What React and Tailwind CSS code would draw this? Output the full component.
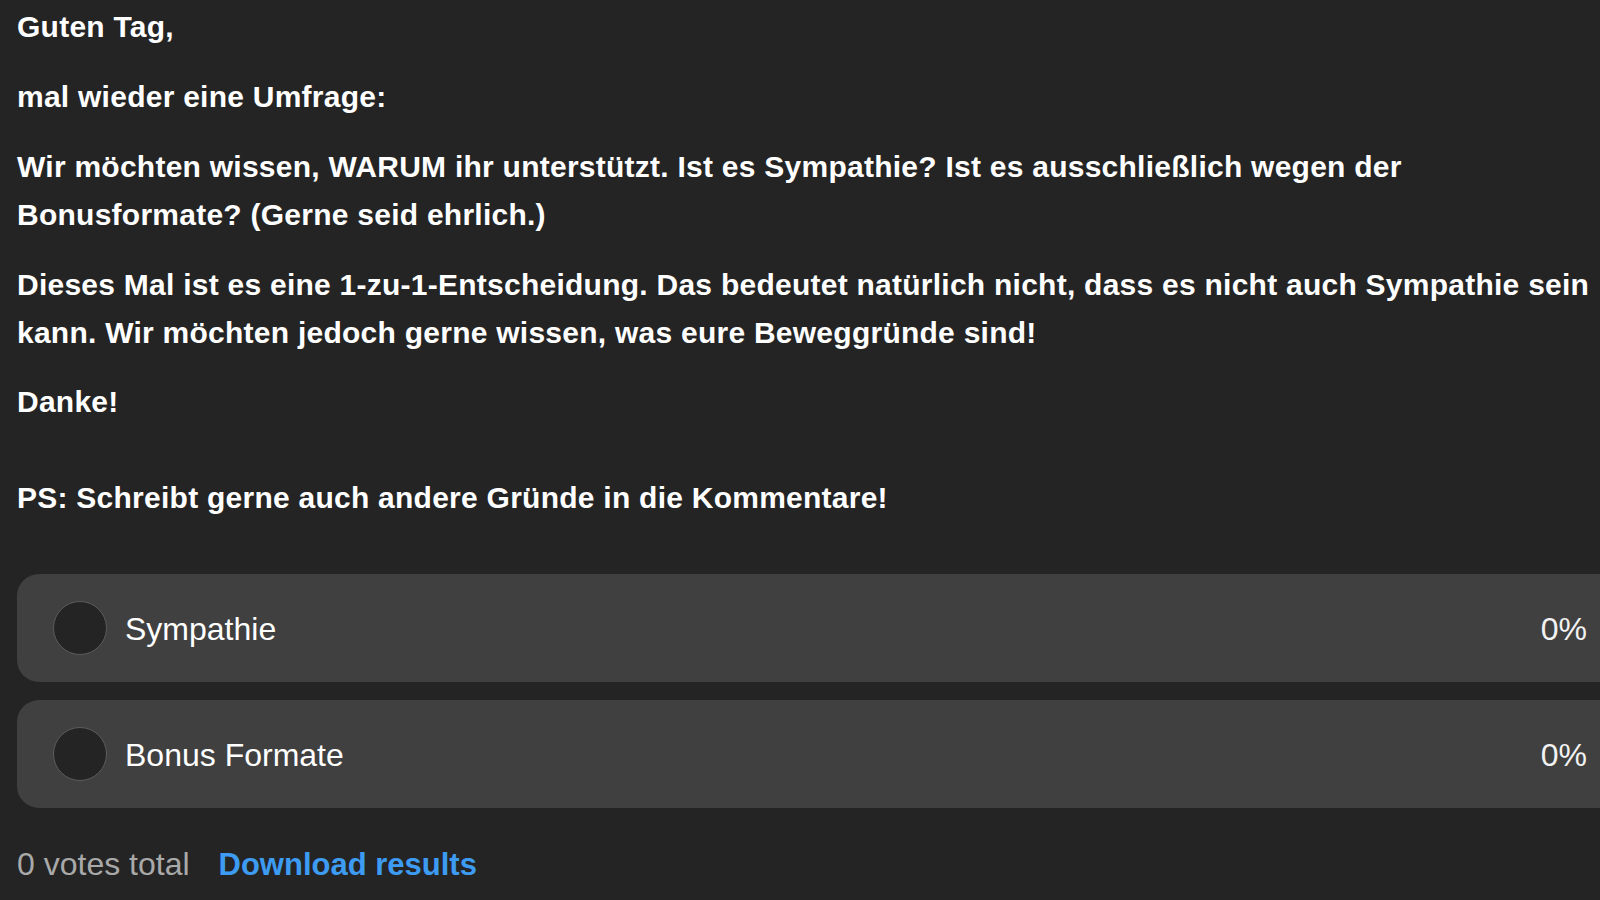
export default function App() {
  const options = [
    { id: 1, label: 'Sympathie', percent: '0%' },
    { id: 2, label: 'Bonus Formate', percent: '0%' },
  ]

  return (
    <div className="h-[900px] w-[1600px] overflow-hidden bg-[#242424] font-['Liberation_Sans',Arial,sans-serif] text-white">
      <div className="w-[1623px] pl-[17px] pt-[3px]">
        <div className="whitespace-nowrap text-[30px] font-bold leading-[48px] tracking-[0.25px] text-white">
          <p>Guten Tag,</p>
          <p className="mt-[22px]">mal wieder eine Umfrage:</p>
          <p className="mt-[22px]">
            Wir möchten wissen, WARUM ihr unterstützt. Ist es Sympathie? Ist es ausschließlich wegen der
            <br />
            Bonusformate? (Gerne seid ehrlich.)
          </p>
          <p className="mt-[22px]">
            Dieses Mal ist es eine 1-zu-1-Entscheidung. Das bedeutet natürlich nicht, dass es nicht auch Sympathie sein
            <br />
            kann. Wir möchten jedoch gerne wissen, was eure Beweggründe sind!
          </p>
          <p className="mt-[21px]">
            Danke!
            <br />
            <br />
            PS: Schreibt gerne auch andere Gründe in die Kommentare!
          </p>
        </div>

        <div className="mt-[52px] flex flex-col gap-[18px]">
          {options.map((opt) => (
            <div key={opt.id} className="flex h-[108px] items-center rounded-[22px] bg-[#404040] pl-[36px] pr-[36px]">
              <span className="h-[54px] w-[54px] shrink-0 rounded-full border border-[#5c5c5c] bg-[#242424]" />
              <span className="ml-[18px] flex-1 pt-[2px] text-[32px] text-white">{opt.label}</span>
              <span className="pt-[2px] text-[32px] text-[#f2f2f2]">{opt.percent}</span>
            </div>
          ))}
        </div>

        <div className="mt-[32px] flex items-baseline gap-[29px] text-[32px]">
          <span className="text-[#a9a9a9]">0 votes total</span>
          <a href="#" className="text-[31px] font-bold text-[#3d9cf2]">Download results</a>
        </div>
      </div>
    </div>
  )
}
